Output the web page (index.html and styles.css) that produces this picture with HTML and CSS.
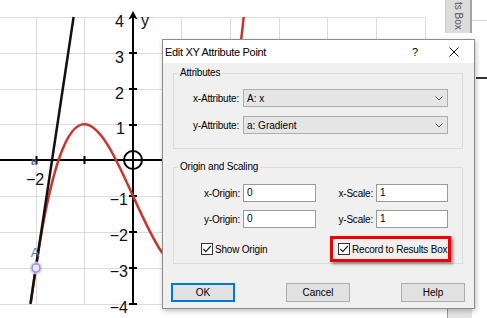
FILE: index.html
```html
<!DOCTYPE html>
<html lang="en">
<head>
  <meta charset="UTF-8">
  <title>Edit XY Attribute Point</title>
  <link rel="stylesheet" href="styles.css">
</head>
<body>
  <div class="desktop">
    <!-- graph canvas behind the dialog -->
    <svg class="graph" width="487" height="318" viewBox="0 0 487 318">
      <defs>
        <clipPath id="plotArea"><rect x="0" y="17" width="426" height="288"/></clipPath>
      </defs>
      <g stroke="#dcdcdc" stroke-width="1">
        <line x1="36.5" y1="17" x2="36.5" y2="304"/>
        <line x1="84.5" y1="17" x2="84.5" y2="304"/>
        <line x1="181.5" y1="17" x2="181.5" y2="304"/>
        <line x1="230.5" y1="17" x2="230.5" y2="304"/>
        <line x1="279.5" y1="17" x2="279.5" y2="304"/>
        <line x1="327.5" y1="17" x2="327.5" y2="304"/>
        <line x1="376.5" y1="17" x2="376.5" y2="304"/>
        <line x1="425.5" y1="17" x2="425.5" y2="304"/>
        <line x1="0" y1="17.5" x2="426" y2="17.5"/>
        <line x1="0" y1="53.5" x2="426" y2="53.5"/>
        <line x1="0" y1="89.5" x2="426" y2="89.5"/>
        <line x1="0" y1="124.5" x2="426" y2="124.5"/>
        <line x1="0" y1="196.5" x2="426" y2="196.5"/>
        <line x1="0" y1="232.5" x2="426" y2="232.5"/>
        <line x1="0" y1="268.5" x2="426" y2="268.5"/>
        <line x1="0" y1="304.5" x2="426" y2="304.5"/>
      </g>

      <!-- axes -->
      <g stroke="#000" stroke-width="2">
        <line x1="0" y1="160" x2="430" y2="160"/>
        <line x1="133" y1="16" x2="133" y2="305"/>
        <line x1="129" y1="53" x2="137" y2="53"/>
        <line x1="129" y1="89" x2="137" y2="89"/>
        <line x1="129" y1="125" x2="137" y2="125"/>
        <line x1="129" y1="196" x2="137" y2="196"/>
        <line x1="129" y1="232" x2="137" y2="232"/>
        <line x1="129" y1="268" x2="137" y2="268"/>
        <line x1="129" y1="304" x2="137" y2="304"/>
        <line x1="84.5" y1="156" x2="84.5" y2="164"/>
        <line x1="36.5" y1="156" x2="36.5" y2="164"/>
      </g>
      <path d="M133 11 L128.5 19.5 L133 17.5 L137.5 19.5 Z" fill="#000"/>
      <circle cx="133" cy="160" r="9" fill="none" stroke="#000" stroke-width="2"/>

      <g class="axis-label" text-anchor="end">
        <text x="124" y="27">4</text>
        <text x="124" y="63">3</text>
        <text x="124" y="99">2</text>
        <text x="125" y="134">1</text>
        <text x="128" y="205">−1</text>
        <text x="128" y="241">−2</text>
        <text x="128" y="277">−3</text>
        <text x="128" y="313">−4</text>
      </g>
      <text class="axis-label" x="35" y="185" text-anchor="middle">−2</text>
      <text class="axis-label" x="141" y="26">y</text>

      <!-- function and tangent -->
      <path clip-path="url(#plotArea)" d="M30.94 302.10 C103.03 -242.28 175.12 705.20 247.21 -16.79" fill="none" stroke="#c8372f" stroke-width="2.5"/>
      <line x1="73.6" y1="17" x2="30.4" y2="304" stroke="#111" stroke-width="2.5"/>

      <circle cx="36" cy="268" r="6.5" fill="#dccbf4" opacity="0.85"/>
      <circle cx="36" cy="268" r="4" fill="#ece4f8" stroke="#7489b3" stroke-width="1.2"/>
      <text class="point-label small" x="34" y="165" text-anchor="middle">a</text>
      <text class="point-label" x="35" y="257" text-anchor="middle">A</text>

      <!-- results panel pieces at the right edge -->
      <line x1="471" y1="20.5" x2="487" y2="20.5" stroke="#d6d6d6"/>
      <line x1="476" y1="78" x2="487" y2="78" stroke="#333" stroke-width="2"/>
      <rect x="447" y="305" width="25" height="13" fill="#e4e4e4"/>
      <line x1="447.5" y1="305" x2="447.5" y2="318" stroke="#9a9a9a"/>
    </svg>

    <div class="results-tab"><span>ts Box</span></div>

    <div class="dialog">
      <div class="titlebar">
        <span class="title">Edit XY Attribute Point</span>
        <span class="title-help">?</span>
        <svg class="title-close" width="10" height="10" viewBox="0 0 10 10"><path d="M0.5 0.5 L9.5 9.5 M9.5 0.5 L0.5 9.5" stroke="#111" stroke-width="1"/></svg>
      </div>

      <div class="dialog-body">
        <fieldset class="group attrs">
          <legend>Attributes</legend>
          <label>x-Attribute:</label>
          <div class="combo">
            <span>A: x</span>
            <svg width="8" height="5" viewBox="0 0 8 5"><path d="M0.5 0.5 L4 4 L7.5 0.5" fill="none" stroke="#555"/></svg>
          </div>
          <label>y-Attribute:</label>
          <div class="combo">
            <span>a: Gradient</span>
            <svg width="8" height="5" viewBox="0 0 8 5"><path d="M0.5 0.5 L4 4 L7.5 0.5" fill="none" stroke="#555"/></svg>
          </div>
        </fieldset>

        <fieldset class="group origin">
          <legend>Origin and Scaling</legend>
          <label>x-Origin:</label>
          <div class="field">0</div>
          <label>x-Scale:</label>
          <div class="field">1</div>
          <label>y-Origin:</label>
          <div class="field">0</div>
          <label>y-Scale:</label>
          <div class="field">1</div>

          <div class="check show-origin">
            <svg width="12" height="12" viewBox="0 0 12 12"><rect x="0.5" y="0.5" width="11" height="11" fill="#fff" stroke="#333"/><path d="M2.3 6 L4.8 8.6 L9.8 3" fill="none" stroke="#222" stroke-width="1.2"/></svg>
            <span>Show Origin</span>
          </div>
          <div class="check record">
            <svg width="12" height="12" viewBox="0 0 12 12"><rect x="0.5" y="0.5" width="11" height="11" fill="#fff" stroke="#333"/><path d="M2.3 6 L4.8 8.6 L9.8 3" fill="none" stroke="#222" stroke-width="1.2"/></svg>
            <span>Record to Results Box</span>
          </div>
        </fieldset>

        <div class="buttons">
          <button class="default">OK</button>
          <button>Cancel</button>
          <button>Help</button>
        </div>
      </div>
    </div>
  </div>
</body>
</html>
```

FILE: styles.css
```css
body {
  margin: 0;
  background-color: #ffffff;
  font-family: 'Liberation Sans', Arial, sans-serif;
}

.desktop {
  position: relative;
  width: 487px;
  height: 318px;
  overflow: hidden;
}

.graph {
  display: block;
}

.axis-label {
  font-family: 'Liberation Sans', Arial, sans-serif;
  font-size: 16px;
  fill: #111;
}

.point-label {
  font-size: 13px;
  fill: #5b7bb0;
}

.point-label.small {
  font-size: 11px;
  font-weight: bold;
  fill: #4b6a9b;
}

/* the docked results panel, rotated tab */
.results-tab {
  position: absolute;
  left: 445px;
  top: 0;
  width: 24px;
  height: 33px;
  display: flex;
  justify-content: center;
  align-items: flex-end;
  overflow: hidden;
  background-color: #dcdcdc;
  border-left: 1px solid #c9c9c9;
  border-right: 2px solid #a4a4a4;
}

.results-tab span {
  writing-mode: vertical-rl;
  font-size: 10px;
  line-height: 12px;
  color: #555;
  white-space: nowrap;
  padding-bottom: 3px;
}

/* dialog window */
.dialog {
  position: absolute;
  left: 162px;
  top: 39px;
  width: 313px;
  height: 270px;
  box-sizing: border-box;
  display: flex;
  flex-direction: column;
  background-color: #f0f0f0;
  border: 1px solid #8c8c8c;
  box-shadow: 1px 2px 5px rgba(0, 0, 0, 0.25);
  font-size: 10px;
  color: #000;
}

.titlebar {
  display: flex;
  align-items: center;
  height: 23px;
  padding: 0 15px 0 2px;
  background-color: #ffffff;
}

.title {
  flex: 1;
  font-size: 11px;
  letter-spacing: -0.3px;
}

.title-help {
  font-size: 11px;
  margin-right: 31px;
}

.dialog-body {
  flex: 1;
  display: flex;
  flex-direction: column;
  padding: 4px 11px 0 10px;
}

.group {
  display: grid;
  align-items: center;
  margin: 0;
  border: 1px solid #dcdcdc;
  min-width: 0;
}

.group legend {
  margin-left: 4px;
  padding: 0 2px;
  line-height: 12px;
  letter-spacing: -0.2px;
}

.group label {
  text-align: right;
  letter-spacing: -0.2px;
}

.attrs {
  grid-template-columns: 65px 205px;
  column-gap: 4px;
  row-gap: 9px;
  padding: 10px 0 14px 0;
}

.combo {
  display: flex;
  align-items: center;
  justify-content: space-between;
  height: 18px;
  box-sizing: border-box;
  padding: 0 4px 0 3px;
  background-color: #e5e5e5;
  border: 1px solid #adadad;
}

.origin {
  grid-template-columns: 66px 73px 54px 72px;
  column-gap: 3px;
  row-gap: 8px;
  margin-top: 12px;
  padding: 11px 0 1px 0;
}

.field {
  height: 18px;
  box-sizing: border-box;
  padding: 0 3px;
  line-height: 16px;
  background-color: #ffffff;
  border: 1px solid #9a9a9a;
}

.check {
  display: flex;
  align-items: center;
  gap: 2px;
  letter-spacing: -0.2px;
}

.show-origin {
  grid-column: 1 / 3;
  padding-left: 27px;
}

.record {
  grid-column: 3 / 5;
  width: 121px;
  height: 26px;
  box-sizing: border-box;
  margin-left: 11px;
  padding-left: 5px;
  border: 3px solid #ee0000;
  box-shadow: 2px 2px 3px rgba(0, 0, 0, 0.45);
}

.buttons {
  display: flex;
  justify-content: space-between;
  margin-top: 19px;
  padding: 0 9px 0 8px;
  margin-left: -10px;
  margin-right: -11px;
}

button {
  width: 64px;
  height: 19px;
  padding: 0;
  font-family: 'Liberation Sans', Arial, sans-serif;
  font-size: 10px;
  color: #000;
  background-color: #e1e1e1;
  border: 1px solid #adadad;
}

button.default {
  border-color: #0078d7;
  box-shadow: inset 0 0 0 1px #0078d7;
}
```
